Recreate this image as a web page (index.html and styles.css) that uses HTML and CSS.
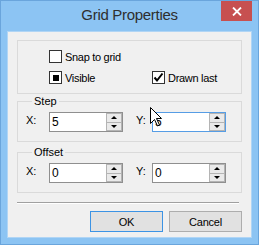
FILE: index.html
```html
<!DOCTYPE html>
<html lang="en">
<head>
    <meta charset="UTF-8">
    <title>Grid Properties</title>
    <link rel="stylesheet" href="styles.css">
</head>
<body>
<div class="window">
    <div class="titlebar">
        <div></div>
        <div class="title">Grid Properties</div>
        <div class="close">
            <svg width="10" height="9" viewBox="0 0 10 9"><path d="M1 0.5 L9 8.5 M9 0.5 L1 8.5" stroke="#fff" stroke-width="1.8"/></svg>
        </div>
    </div>

    <div class="client">
        <div class="group flags">
            <label class="check"><span class="box"></span>Snap to grid</label>
            <span></span>
            <label class="check"><span class="box"><span class="mixed"></span></span>Visible</label>
            <label class="check"><span class="box">
                <svg width="11" height="11" viewBox="0 0 11 11"><path d="M1.5 5.5 L4 8.5 L9.5 1.5" fill="none" stroke="#000" stroke-width="2"/></svg>
            </span>Drawn last</label>
        </div>

        <fieldset class="group">
            <legend>Step</legend>
            <div class="fields">
                <span class="lbl">X:</span>
                <div class="spin"><span class="val">5</span><div class="arrows"><span class="up"></span><span class="down"></span></div></div>
                <span></span>
                <span class="lbl">Y:</span>
                <div class="spin focus"><span class="val">5</span><div class="arrows"><span class="up"></span><span class="down"></span></div></div>
            </div>
        </fieldset>

        <fieldset class="group offset">
            <legend>Offset</legend>
            <div class="fields">
                <span class="lbl">X:</span>
                <div class="spin"><span class="val">0</span><div class="arrows"><span class="up"></span><span class="down"></span></div></div>
                <span></span>
                <span class="lbl">Y:</span>
                <div class="spin"><span class="val">0</span><div class="arrows"><span class="up"></span><span class="down"></span></div></div>
            </div>
        </fieldset>

        <div class="separator"></div>

        <div class="buttons">
            <button class="btn default">OK</button>
            <button class="btn">Cancel</button>
        </div>
    </div>

    <!-- mouse pointer over the Y field -->
    <svg class="cursor" width="13" height="20" viewBox="0 0 13 20">
        <path d="M0.5 0.5 L0.5 16.5 L4.5 12.5 L7.5 19 L9.5 18 L6.5 11.5 L11.5 11.5 Z" fill="#fff" stroke="#000" stroke-width="1"/>
    </svg>
</div>
</body>
</html>
```

FILE: styles.css
```css
body {
    margin: 0;
    font-family: "Liberation Sans", Arial, sans-serif;
    font-size: 11px;
    color: #000;
}

.window {
    width: 259px;
    height: 245px;
    box-sizing: border-box;
    background-color: #8cc4f3;
    border: 1px solid #6aa5dc;
    position: relative;
}

.titlebar {
    height: 30px;
    display: grid;
    grid-template-columns: 1fr auto 1fr;
}

.title {
    font-size: 15px;
    letter-spacing: -0.3px;
    line-height: 28px;
    color: #2e2e2e;
}

.close {
    justify-self: end;
    align-self: start;
    margin-right: 6px;
    width: 31px;
    height: 20px;
    background-color: #c75050;
    display: flex;
    align-items: center;
    justify-content: center;
}

.client {
    margin: 0 6px;
    height: 207px;
    box-sizing: border-box;
    border: 1px solid #b0d5f5;
    background-color: #f0f0f0;
    padding: 8px 9px 0 9px;
}

.group {
    border: 1px solid #dadada;
}

.flags {
    height: 54px;
    box-sizing: border-box;
    padding: 9px 0 0 31px;
    display: grid;
    grid-template-columns: 103px auto;
    grid-auto-rows: 13px;
    row-gap: 8px;
}

.check {
    display: flex;
    align-items: center;
    gap: 3px;
    letter-spacing: -0.3px;
    white-space: nowrap;
}

.box {
    width: 13px;
    height: 13px;
    box-sizing: border-box;
    border: 1px solid #333;
    background-color: #fff;
    display: flex;
    align-items: center;
    justify-content: center;
}

.mixed {
    width: 6px;
    height: 6px;
    background-color: #000;
}

fieldset.group {
    margin: 1px 0 0;
    padding: 4px 0 9px 8px;
    min-width: 0;
}

fieldset.offset {
    margin-top: 4px;
}

legend {
    margin-left: 6px;
    padding: 0 2px;
    line-height: 13px;
}

.fields {
    display: grid;
    grid-template-columns: 23px 74px 13px 16px 74px;
    height: 20px;
}

.lbl {
    line-height: 13px;
    margin-top: 2px;
}

.spin {
    display: flex;
    box-sizing: border-box;
    height: 20px;
    border: 1px solid #8f8f8f;
    background-color: #fff;
}

.spin.focus {
    border-color: #569de5;
}

.val {
    flex: 1;
    padding-left: 2px;
    font-size: 12px;
    line-height: 18px;
}

.arrows {
    width: 16px;
    display: flex;
    flex-direction: column;
    border: 1px solid #b4b4b4;
    box-sizing: border-box;
}

.up,
.down {
    flex: 1;
    background-color: #eaeaea;
    display: flex;
    align-items: center;
    justify-content: center;
}

.up {
    border-bottom: 1px solid #b4b4b4;
}

.up::after {
    content: "";
    border-left: 3px solid transparent;
    border-right: 3px solid transparent;
    border-bottom: 3px solid #000;
}

.down::after {
    content: "";
    border-left: 3px solid transparent;
    border-right: 3px solid transparent;
    border-top: 3px solid #000;
}

.separator {
    margin: 9px 3px 0 0;
    border-top: 1px solid #a0a0a0;
    border-bottom: 1px solid #fff;
}

.buttons {
    display: flex;
    justify-content: flex-end;
    gap: 6px;
    margin-top: 7px;
}

.btn {
    width: 73px;
    height: 21px;
    padding: 0;
    font-family: "Liberation Sans", Arial, sans-serif;
    font-size: 11px;
    letter-spacing: -0.2px;
    color: #000;
    background-color: #e1e1e1;
    border: 1px solid #adadad;
}

.btn.default {
    border-color: #3c93e4;
}

.cursor {
    position: absolute;
    left: 149px;
    top: 106px;
}
```
